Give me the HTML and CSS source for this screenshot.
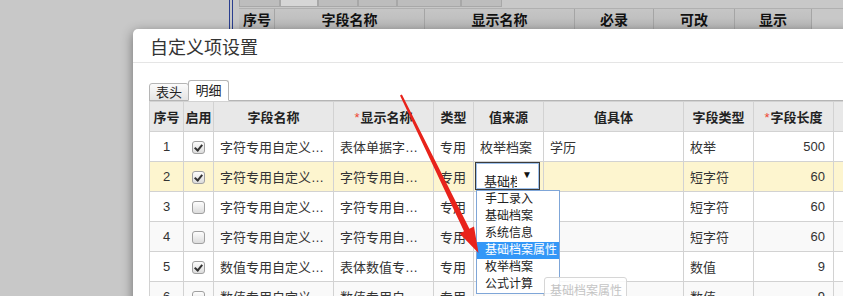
FILE: index.html
```html
<!DOCTYPE html>
<html lang="zh-CN">
<head>
<meta charset="utf-8">
<link rel="stylesheet" href="styles.css">
</head>
<body>
  <div class="app">
    <div class="side"></div>
    <div class="frame">
      <div class="bg-tabs">
        <span class="bg-tab" style="width:41px"></span>
        <span class="bg-tab on" style="width:38px"></span>
        <span class="bg-tab" style="width:40px"></span>
        <span class="bg-tab" style="width:39px"></span>
        <span class="bg-tab" style="width:64px"></span>
        <span class="bg-tab" style="width:41px"></span>
      </div>
      <div class="bg-head">
        <span class="bg-th first" style="width:36px">序号</span>
        <span class="bg-th" style="width:150px">字段名称</span>
        <span class="bg-th" style="width:150px">显示名称</span>
        <span class="bg-th" style="width:79px">必录</span>
        <span class="bg-th" style="width:81px">可改</span>
        <span class="bg-th" style="width:77px">显示</span>
      </div>
    </div>
  </div>

  <div class="modal">
    <div class="modal-head">
      <h4 class="modal-title">自定义项设置</h4>
    </div>
    <div class="modal-body">
      <div class="tabs">
        <span class="tab">表头</span>
        <span class="tab on">明细</span>
      </div>
      <table class="grid">
        <colgroup>
          <col style="width:34px"><col style="width:30px"><col style="width:120px">
          <col style="width:100px"><col style="width:40px"><col style="width:70px">
          <col style="width:140px"><col style="width:70px"><col style="width:80px">
          <col style="width:80px">
        </colgroup>
        <thead>
          <tr>
            <th>序号</th><th>启用</th><th>字段名称</th><th><i class="req">*</i>显示名称</th>
            <th>类型</th><th>值来源</th><th>值具体</th><th>字段类型</th>
            <th><i class="req">*</i>字段长度</th><th></th>
          </tr>
        </thead>
        <tbody>
          <tr>
            <td class="c">1</td><td class="c"><span class="cb on"></span></td>
            <td>字符专用自定义项1</td><td>表体单据字符自定义项1</td><td>专用</td>
            <td>枚举档案</td><td>学历</td><td>枚举</td><td class="r">500</td><td></td>
          </tr>
          <tr class="cur">
            <td class="c">2</td><td class="c"><span class="cb on"></span></td>
            <td>字符专用自定义项2</td><td>字符专用自定义项2</td><td>专用</td>
            <td class="edit">
              <div class="sel"><span class="sel-text">基础档案属性</span><span class="sel-caret">▼</span></div>
              <ul class="menu">
                <li>手工录入</li>
                <li>基础档案</li>
                <li>系统信息</li>
                <li class="hi">基础档案属性</li>
                <li>枚举档案</li>
                <li>公式计算</li>
              </ul>
              <div class="tip">基础档案属性</div>
            </td>
            <td></td><td>短字符</td><td class="r">60</td><td></td>
          </tr>
          <tr>
            <td class="c">3</td><td class="c"><span class="cb"></span></td>
            <td>字符专用自定义项3</td><td>字符专用自定义项3</td><td>专用</td>
            <td></td><td></td><td>短字符</td><td class="r">60</td><td></td>
          </tr>
          <tr class="alt">
            <td class="c">4</td><td class="c"><span class="cb"></span></td>
            <td>字符专用自定义项4</td><td>字符专用自定义项4</td><td>专用</td>
            <td></td><td></td><td>短字符</td><td class="r">60</td><td></td>
          </tr>
          <tr>
            <td class="c">5</td><td class="c"><span class="cb on"></span></td>
            <td>数值专用自定义项1</td><td>表体数值专用自定义项1</td><td>专用</td>
            <td></td><td></td><td>数值</td><td class="r">9</td><td></td>
          </tr>
          <tr class="alt">
            <td class="c">6</td><td class="c"><span class="cb"></span></td>
            <td>数值专用自定义项2</td><td>数值专用自定义项2</td><td>专用</td>
            <td></td><td></td><td>数值</td><td class="r">9</td><td></td>
          </tr>
        </tbody>
      </table>
    </div>
  </div>

  <svg class="arrow" width="843" height="296" viewBox="0 0 843 296">
    <polygon points="400,95.4 401.9,94.6 469.4,228.7 474,226.5 478.5,253 459.5,233.5 464,231.3" fill="#e8231b"/>
  </svg>
</body>
</html>
```

FILE: styles.css
```css
html, body { margin:0; padding:0; }
body { width:843px; height:296px; overflow:hidden; position:relative; background:#c8c8c8;
  font:13px "Liberation Sans","Noto Sans CJK SC",sans-serif; color:#333; }

/* page behind the overlay */
.app { display:flex; height:296px; }
.side { width:229px; flex:none; border-right:1px solid #2a3f8f; }
.frame { flex:1; margin-left:2px; border-left:1px solid #2a3f8f; padding-left:6px; }
.bg-tabs { display:flex; height:7px; }
.bg-tab { height:7px; box-sizing:border-box; background:#bdbdbd; border:1px solid #a8a8a8; border-top:none; }
.bg-tab.on { background:#d6d6d6; }
.bg-head { display:flex; margin-top:1px; height:22px; border-top:1px solid #b0b0b0; }
.bg-th { box-sizing:border-box; height:22px; line-height:22px; text-align:center; font-weight:bold; font-size:14px; color:#111;
  background:linear-gradient(#c6c6c6,#b8b8b8); border-right:1px solid #a5a5a5; }
.bg-th.first { text-align:left; padding-left:4px; }

/* dialog */
.modal { position:absolute; left:133px; top:29px; width:760px; height:300px; background:#fff;
  border-radius:5px; box-shadow:0 3px 12px rgba(0,0,0,.45); }
.modal-head { height:33px; border-bottom:1px solid #e5e5e5; display:flex; align-items:center; padding-left:17px; }
.modal-title { margin:0; font-size:18px; font-weight:normal; color:#333; }
.modal-body { padding:17px 0 0 16px; }

.tabs { display:flex; align-items:flex-end; height:20px; border-bottom:1px solid #b5b5b5; }
.tab { box-sizing:border-box; width:40px; height:18px; line-height:17px; text-align:center; margin-bottom:-1px; border:1px solid #b5b5b5;
  border-radius:3px 3px 0 0; background:linear-gradient(#fbfbfb,#e4e4e4); color:#222; }
.tab.on { width:41px; height:21px; line-height:20px; background:#fff; border-bottom-color:#fff; margin-left:-1px; }

.grid { border-collapse:collapse; table-layout:fixed; width:764px; }
.grid th, .grid td { height:29px; padding:0 6px; border:1px solid #d2d2d2; white-space:nowrap; overflow:hidden;
  text-overflow:ellipsis; font-size:13px; }
.grid th { background:#e8e8e8; font-weight:bold; color:#222; text-align:center; padding:0; text-overflow:clip; }
.grid .c { text-align:center; padding:0; }
.grid .r { text-align:right; padding-right:8px; }
.req { color:#e43; font-style:normal; font-weight:normal; margin-right:1px; }
.grid tr.cur td { background:#fdf5cf; }
.grid tr.alt td { background:#f9f9f9; }

.cb { display:inline-block; vertical-align:middle; width:13px; height:13px; box-sizing:border-box; border:1px solid #a0a0a0;
  border-radius:3px; background:linear-gradient(#fdfdfd,#dcdcdc); position:relative; }
.cb.on::after { content:""; position:absolute; left:3px; top:1px; width:3px; height:6px; border:solid #333;
  border-width:0 2px 2px 0; transform:rotate(40deg); }

/* open select in row 2 */
.grid td.edit { overflow:visible; position:relative; padding:0; }
.sel { position:absolute; left:1px; top:0; width:65px; height:28px; box-sizing:border-box; border:1px solid #3b3b3b;
  box-shadow:inset 0 0 0 1px #9ec1ec; background:#fff; }
.sel-text { position:absolute; left:8px; top:8px; width:33px; overflow:hidden; white-space:nowrap; font-size:13px; color:#222; }
.sel-caret { position:absolute; right:7px; top:6px; font-size:10px; color:#111; }
.menu { position:absolute; left:2px; top:28px; width:84px; margin:0; padding:0; list-style:none; background:#fff;
  border:1px solid #7fa6d8; box-sizing:border-box; z-index:2; }
.menu li { height:17px; line-height:17px; padding-left:8px; font-size:12px; color:#222; }
.menu li.hi { background:#3397f7; color:#fff; }
.tip { position:absolute; left:70px; top:115px; width:83px; height:22px; box-sizing:border-box; padding:3px 0 0 5px;
  border:1px solid #d6d6d6; border-radius:3px; background:rgba(255,255,255,.85); color:#c4c4c4; font-size:12px; z-index:3; }

.arrow { position:absolute; left:0; top:0; z-index:5; }
```
